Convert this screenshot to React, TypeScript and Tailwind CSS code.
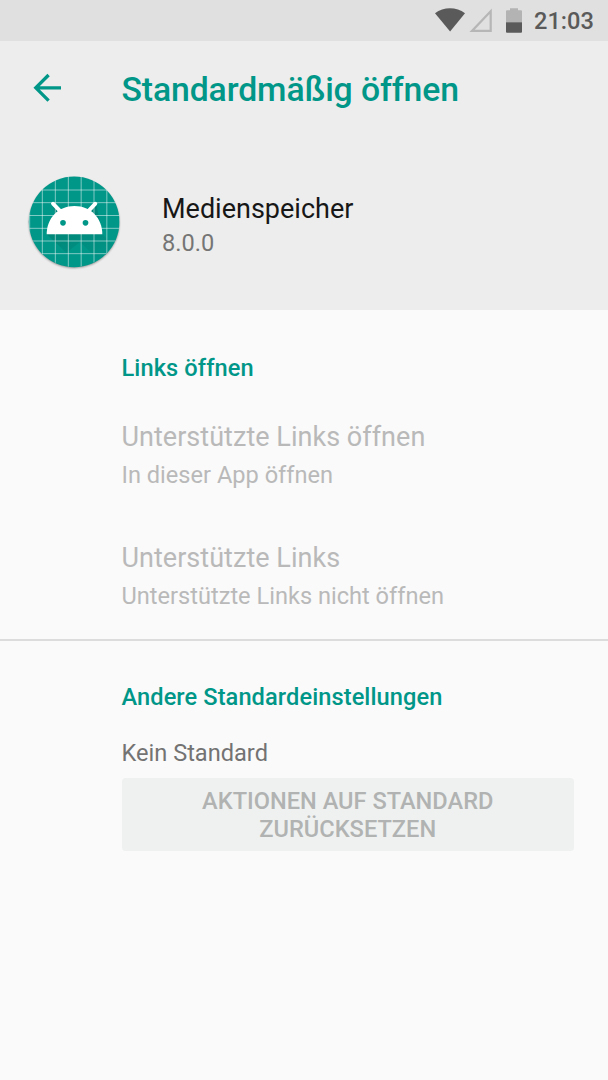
import type { ReactNode } from "react";

function StatusBar() {
  return (
    <div className="flex h-[41px] w-full shrink-0 bg-[#e0e0e0]">
      <svg className="ml-[430px] h-[41px] w-[100px] shrink-0" viewBox="0 0 100 41">
        <path d="M5 13.2C13.5 6.5 26.5 6.5 35 13.2L20.1 31.6Z" fill="#5a5a5a" />
        <path d="M60.7 11.3V30.9H42Z" fill="none" stroke="#b6b6b6" strokeWidth="2.2" />
        <path d="M76 22.3V11.3Q76 10.3 77 10.3H80V8.2H88V10.3H91Q92 10.3 92 11.3V22.3Z" fill="#b3b3b3" />
        <path d="M76 22.3H92V31.8Q92 32.8 91 32.8H77Q76 32.8 76 31.8Z" fill="#5a5a5a" />
      </svg>
      <span className="ml-[4px] text-[23.6px] leading-[42px] font-medium text-[#5a5a5a]">21:03</span>
    </div>
  );
}

function BackArrow() {
  return (
    <svg className="h-[40px] w-[121.5px] shrink-0" viewBox="0 0 121.5 40">
      <path d="M61 17.8H36M48.6 5L35.8 17.8L48.6 30.6" fill="none" stroke="#009688" strokeWidth="3.3" />
    </svg>
  );
}

const columns = [29, 67, 106, 145, 183.5, 222, 260.5, 299];
const rows = [75, 113, 151.5, 190, 228, 266];

function AppIcon() {
  return (
    <svg className="h-[115px] w-[110px] shrink-0" viewBox="0 0 330 345">
      <defs>
        <clipPath id="disc">
          <circle cx="162.5" cy="170" r="136" />
        </clipPath>
        <filter id="soft" x="-10%" y="-10%" width="120%" height="120%">
          <feGaussianBlur stdDeviation="3" />
        </filter>
        <linearGradient id="shade" x1="0" y1="0" x2="0.6" y2="1">
          <stop offset="0.3" stopColor="#004d40" stopOpacity="0.25" />
          <stop offset="1" stopColor="#004d40" stopOpacity="0" />
        </linearGradient>
      </defs>
      <circle cx="162.5" cy="174" r="135" fill="#000" opacity="0.42" filter="url(#soft)" />
      <circle cx="162.5" cy="170.5" r="136" fill="#009688" />
      <g clipPath="url(#disc)">
        <path d="M80 208L140 264L180 230L250 300L330 290L247 208L228 112L205 140L120 140L97 116L105 145Z" fill="url(#shade)" />
        <g stroke="#fff" strokeOpacity="0.5" strokeWidth="3">
          {columns.map((x) => (
            <path key={x} d={`M${x} 30V310`} />
          ))}
          {rows.map((y) => (
            <path key={y} d={`M20 ${y}H305`} />
          ))}
        </g>
      </g>
      <path d="M80 208C80 160 114 123 163.5 123S247 160 247 208Z" fill="#fff" />
      <path d="M99 116L125 143M226 116L201 143" stroke="#fff" strokeWidth="11.5" strokeLinecap="round" />
      <circle cx="129" cy="173.5" r="8.5" fill="#009688" />
      <circle cx="196.5" cy="173.5" r="8.5" fill="#009688" />
    </svg>
  );
}

function SectionTitle({ children }: { children: ReactNode }) {
  return (
    <h2 className="text-[23.6px] leading-[28px] font-medium tracking-[0.09px] text-[#009688]">{children}</h2>
  );
}

function DisabledPreference({ title, summary }: { title: string; summary: string }) {
  return (
    <div className="text-[#b9b9b9]">
      <div className="text-[27px] leading-[38px] tracking-[0.03px]">{title}</div>
      <div className="text-[23.6px] leading-[38px]">{summary}</div>
    </div>
  );
}

export default function App() {
  return (
    <div className="flex h-[1080px] w-[608px] flex-col overflow-hidden bg-[#fafafa] font-['Roboto',sans-serif]">
      <StatusBar />
      <header className="flex h-[269px] shrink-0 flex-col bg-[#ededed]">
        <div className="flex pt-[29px]">
          <BackArrow />
          <h1 className="text-[33.75px] leading-[40px] font-medium tracking-[-0.11px] text-[#009688]">
            Standardmäßig öffnen
          </h1>
        </div>
        <div className="mt-[55px] flex pl-[20px]">
          <AppIcon />
          <div className="ml-[32px] pt-[26px]">
            <div className="text-[27px] leading-[36px] text-[#171717]">Medienspeicher</div>
            <div className="text-[23.6px] leading-[33px] text-[#757575]">8.0.0</div>
          </div>
        </div>
      </header>
      <section className="flex h-[331px] shrink-0 flex-col border-b-2 border-[#dcdcdc] pt-[44px] pl-[121.5px]">
        <SectionTitle>Links öffnen</SectionTitle>
        <div className="mt-[36px] flex flex-col gap-[45px]">
          <DisabledPreference title="Unterstützte Links öffnen" summary="In dieser App öffnen" />
          <DisabledPreference title="Unterstützte Links" summary="Unterstützte Links nicht öffnen" />
        </div>
      </section>
      <section className="pt-[42px] pr-[34px] pl-[121.5px]">
        <SectionTitle>Andere Standardeinstellungen</SectionTitle>
        <p className="mt-[28px] text-[23.6px] leading-[28px] text-[#737373]">Kein Standard</p>
        <button
          disabled
          className="mt-[11px] flex h-[73px] w-full items-center justify-center rounded-[3.5px] bg-[#eff1f0] pt-[3px] text-center text-[23.6px] leading-[27.7px] font-medium text-[#b1b3b2]"
        >
          <span>
            AKTIONEN AUF STANDARD
            <br />
            ZURÜCKSETZEN
          </span>
        </button>
      </section>
    </div>
  );
}
